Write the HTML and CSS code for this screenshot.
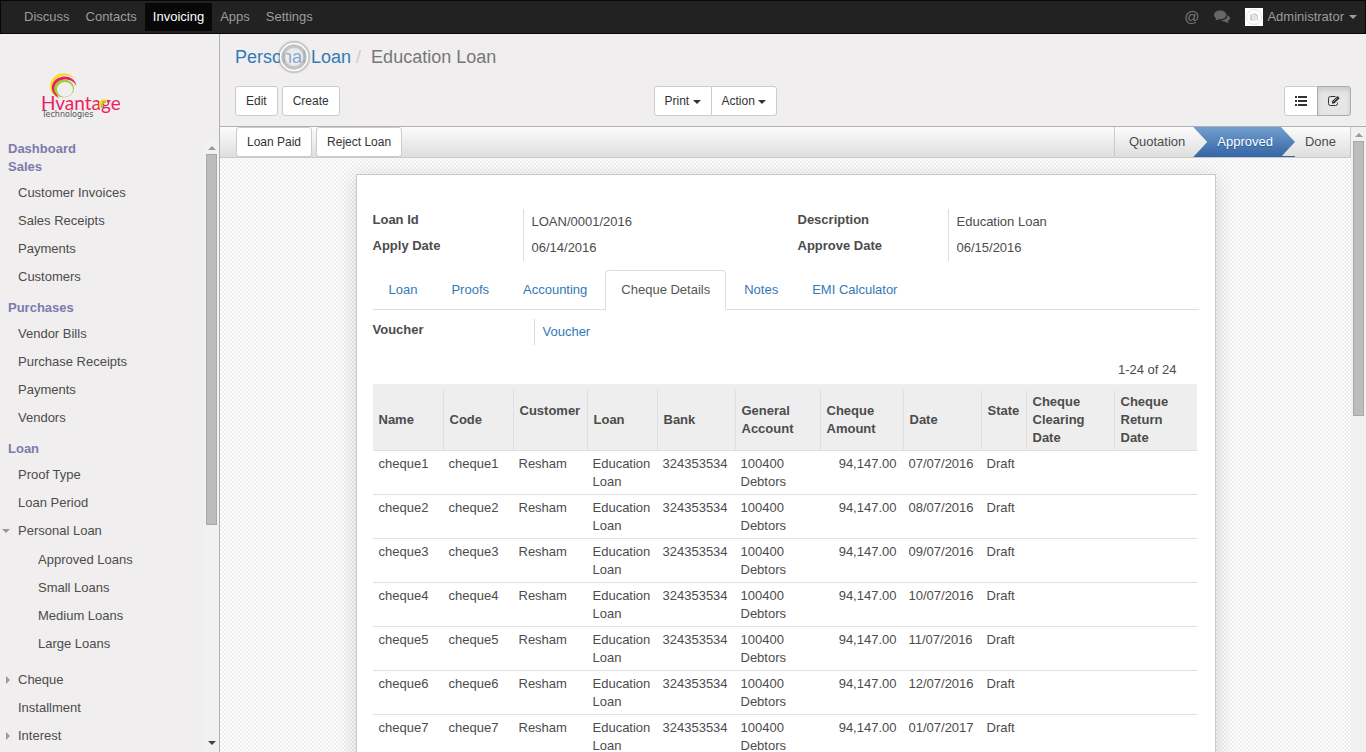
FILE: index.html
```html
<!DOCTYPE html>
<html lang="en">
<head>
    <meta charset="UTF-8">
    <meta name="viewport" content="width=device-width, initial-scale=1.0">
    <title>Education Loan - Odoo</title>
    <link rel="stylesheet" href="styles.css">
</head>
<body>

    <nav class="navbar">
        <ul class="nav-menu">
            <li><a href="#">Discuss</a></li>
            <li><a href="#">Contacts</a></li>
            <li><a href="#" class="active">Invoicing</a></li>
            <li><a href="#">Apps</a></li>
            <li><a href="#">Settings</a></li>
        </ul>
        <div class="systray">
            <a href="#" class="mention" aria-label="Mentions">@</a>
            <a href="#" class="chat" aria-label="Conversations">
                <svg width="16" height="14" viewBox="0 0 16 14" fill="#666">
                    <path d="M6.2 0.5C2.8 0.5 0 2.5 0 5c0 1.4 0.9 2.6 2.2 3.4C2 9.300 1.500 9.900 1 10.500c1.500-.1 2.800-.6 3.800-1.300 .5.1 .9.1 1.400.1 3.400 0 6.200-1.900 6.200-4.300S9.600.5 6.200.5z"/>
                    <path d="M13.600 5.200c0 3-3.200 5.200-7 5.300 1.100.8 2.600 1.200 4 1.100 1.100.8 2.500 1.300 4.300 1.400-.6-.6-1-1.200-1.200-2C15 10.200 16 9.100 16 7.900c0-1.100-.9-2.100-2.400-2.700z"/>
                </svg>
            </a>
            <a href="#" class="user">
                <svg width="18" height="18" viewBox="0 0 18 18">
                    <rect width="18" height="18" fill="#fff"/>
                    <circle cx="9" cy="9" r="7.500" fill="none" stroke="#e4e4e4"/>
                    <path d="M5 6.500h2l1-1h3l1 1h1v6H5z" fill="#d0d0d0"/>
                    <circle cx="9.500" cy="9.500" r="1.800" fill="none" stroke="#fff"/>
                    <path d="M4 4l10 10" stroke="#eee"/>
                </svg>
                Administrator
                <span class="caret"></span>
            </a>
        </div>
    </nav>

    <div class="webclient">
        <aside class="sidebar">
            <a href="#" class="logo" aria-label="Hvantage Technologies">
                <svg width="82" height="50" viewBox="0 0 82 50">
                    <path fill="#fadb1c" d="M34 9A13.500 13 0 1 0 16 26C6 17 12 3 23 3.500c5 0 9 2 11 5.500z"/>
                    <path fill="#ec1e63" d="M34.500 14C33 3 17 1 11 11c-3 6 0 12 6 15C12 19 14 8 23 7.500c5 0 9 2 11.500 6.500z"/>
                    <path fill="#a2cd3a" fill-rule="evenodd" d="M22 7.500a10 9 0 1 0 .1 18a10 9 0 1 0-.1-18zM23 10a8 7.500 0 1 1-.1 15a8 7.500 0 1 1 .1-15z"/>
                    <text x="-1" y="38" class="logo-name">Hvantage</text>
                    <path fill="none" stroke="#fadb1c" stroke-width="2" d="M58 35c-1-5 2-8 7-6"/>
                    <path fill="none" stroke="#a2cd3a" stroke-width="2" d="M60 36c-1-4 1-6 4-6"/>
                    <text x="0" y="45" class="logo-sub">Technologies</text>
                </svg>
            </a>
            <div class="menu-wrap">
                <div class="menu">
                    <a href="#" class="menu-title">Dashboard</a>
                    <a href="#" class="menu-title">Sales</a>
                    <ul>
                        <li><a href="#">Customer Invoices</a></li>
                        <li><a href="#">Sales Receipts</a></li>
                        <li><a href="#">Payments</a></li>
                        <li><a href="#">Customers</a></li>
                    </ul>
                    <a href="#" class="menu-title">Purchases</a>
                    <ul>
                        <li><a href="#">Vendor Bills</a></li>
                        <li><a href="#">Purchase Receipts</a></li>
                        <li><a href="#">Payments</a></li>
                        <li><a href="#">Vendors</a></li>
                    </ul>
                    <a href="#" class="menu-title">Loan</a>
                    <ul>
                        <li><a href="#">Proof Type</a></li>
                        <li><a href="#">Loan Period</a></li>
                        <li>
                            <a href="#" class="toggle opened">Personal Loan</a>
                            <ul class="submenu">
                                <li><a href="#">Approved Loans</a></li>
                                <li><a href="#">Small Loans</a></li>
                                <li><a href="#">Medium Loans</a></li>
                                <li><a href="#">Large Loans</a></li>
                            </ul>
                        </li>
                        <li><a href="#" class="toggle">Cheque</a></li>
                        <li><a href="#">Installment</a></li>
                        <li><a href="#" class="toggle">Interest</a></li>
                    </ul>
                </div>
                <div class="scrollbar">
                    <span class="arrow-up"></span>
                    <span class="thumb thumb-menu"></span>
                    <span class="arrow-down"></span>
                </div>
            </div>
        </aside>

        <main class="content">
            <header class="control-panel">
                <ol class="breadcrumb">
                    <li><a href="#">Personal Loan</a></li>
                    <li>Education Loan</li>
                </ol>
                <svg class="click-ring" width="36" height="36" viewBox="0 0 36 36">
                    <circle cx="18" cy="18" r="17" fill="#000" fill-opacity=".05"/>
                    <circle cx="18" cy="18" r="15" fill="none" stroke="#888" stroke-opacity=".3" stroke-width="2"/>
                    <circle cx="18" cy="18" r="8" fill="#fff" fill-opacity=".4"/>
                    <circle cx="18" cy="18" r="11" fill="none" stroke="#bbb" stroke-opacity=".8" stroke-width="4"/>
                    <circle cx="18" cy="18" r="13.500" fill="none" stroke="#fff" stroke-width="1.500"/>
                    <circle cx="18" cy="18" r="9" fill="none" stroke="#e4e4e4" stroke-width="1"/>
                </svg>
                <div class="cp-row">
                    <div class="cp-buttons">
                        <button type="button" class="btn">Edit</button>
                        <button type="button" class="btn">Create</button>
                    </div>
                    <div class="cp-right">
                        <div class="btn-group">
                            <button type="button" class="btn">Print <span class="caret"></span></button>
                            <button type="button" class="btn">Action <span class="caret"></span></button>
                        </div>
                        <div class="btn-group">
                            <button type="button" class="btn btn-icon" aria-label="List view">
                                <svg width="12" height="10" viewBox="0 0 12 10" fill="#333">
                                    <path d="M0 0h2v2H0zM3 0h9v2H3zM0 4h2v2H0zM3 4h9v2H3zM0 8h2v2H0zM3 8h9v2H3z"/>
                                </svg>
                            </button>
                            <button type="button" class="btn btn-icon active" aria-label="Form view">
                                <svg width="12" height="12" viewBox="0 0 12 12">
                                    <path d="M7.500 1.500H2.500A2 2 0 0 0 .5 3.500v5A2 2 0 0 0 2.500 10.500h5A2 2 0 0 0 9.500 8.500V7.500" fill="none" stroke="#333"/>
                                    <path d="M4 8.500V6.300L9.500 1l2.200 2.200L6.200 8.500z" fill="#333"/>
                                    <path d="M5.500 6.500L9 3" stroke="#e6e6e6" stroke-width=".6"/>
                                </svg>
                            </button>
                        </div>
                    </div>
                </div>
            </header>

            <div class="view-wrap">
                <div class="form-view">
                    <div class="statusbar">
                        <div class="status-buttons">
                            <button type="button" class="btn">Loan Paid</button>
                            <button type="button" class="btn">Reject Loan</button>
                        </div>
                        <ul class="status">
                            <li>Quotation</li>
                            <li class="current">Approved</li>
                            <li>Done</li>
                        </ul>
                    </div>

                    <div class="sheet">
                        <div class="group">
                            <dl class="fields">
                                <dt>Loan Id</dt><dd>LOAN/0001/2016</dd>
                                <dt>Apply Date</dt><dd>06/14/2016</dd>
                            </dl>
                            <dl class="fields">
                                <dt>Description</dt><dd>Education Loan</dd>
                                <dt>Approve Date</dt><dd>06/15/2016</dd>
                            </dl>
                        </div>

                        <ul class="tabs">
                            <li><a href="#">Loan</a></li>
                            <li><a href="#">Proofs</a></li>
                            <li><a href="#">Accounting</a></li>
                            <li><a href="#" class="active">Cheque Details</a></li>
                            <li><a href="#">Notes</a></li>
                            <li><a href="#">EMI Calculator</a></li>
                        </ul>

                        <dl class="fields voucher">
                            <dt>Voucher</dt><dd><a href="#">Voucher</a></dd>
                        </dl>

                        <div class="pager">1-24 of 24</div>
                        <table class="list">
                            <colgroup>
                                <col class="w-70"><col class="w-70"><col class="w-74"><col class="w-70">
                                <col class="w-78"><col class="w-85"><col class="w-83"><col class="w-78">
                                <col class="w-45"><col class="w-88"><col>
                            </colgroup>
                            <thead>
                                <tr>
                                    <th>Name</th>
                                    <th>Code</th>
                                    <th>Customer<br>&nbsp;</th>
                                    <th>Loan</th>
                                    <th>Bank</th>
                                    <th>General Account</th>
                                    <th>Cheque Amount</th>
                                    <th>Date</th>
                                    <th>State<br>&nbsp;</th>
                                    <th>Cheque Clearing Date</th>
                                    <th>Cheque Return Date</th>
                                </tr>
                            </thead>
                            <tbody>
                                <tr><td>cheque1</td><td>cheque1</td><td>Resham</td><td>Education Loan</td><td>324353534</td><td>100400 Debtors</td><td class="number">94,147.00</td><td>07/07/2016</td><td>Draft</td><td></td><td></td></tr>
                                <tr><td>cheque2</td><td>cheque2</td><td>Resham</td><td>Education Loan</td><td>324353534</td><td>100400 Debtors</td><td class="number">94,147.00</td><td>08/07/2016</td><td>Draft</td><td></td><td></td></tr>
                                <tr><td>cheque3</td><td>cheque3</td><td>Resham</td><td>Education Loan</td><td>324353534</td><td>100400 Debtors</td><td class="number">94,147.00</td><td>09/07/2016</td><td>Draft</td><td></td><td></td></tr>
                                <tr><td>cheque4</td><td>cheque4</td><td>Resham</td><td>Education Loan</td><td>324353534</td><td>100400 Debtors</td><td class="number">94,147.00</td><td>10/07/2016</td><td>Draft</td><td></td><td></td></tr>
                                <tr><td>cheque5</td><td>cheque5</td><td>Resham</td><td>Education Loan</td><td>324353534</td><td>100400 Debtors</td><td class="number">94,147.00</td><td>11/07/2016</td><td>Draft</td><td></td><td></td></tr>
                                <tr><td>cheque6</td><td>cheque6</td><td>Resham</td><td>Education Loan</td><td>324353534</td><td>100400 Debtors</td><td class="number">94,147.00</td><td>12/07/2016</td><td>Draft</td><td></td><td></td></tr>
                                <tr><td>cheque7</td><td>cheque7</td><td>Resham</td><td>Education Loan</td><td>324353534</td><td>100400 Debtors</td><td class="number">94,147.00</td><td>01/07/2017</td><td>Draft</td><td></td><td></td></tr>
                            </tbody>
                        </table>
                    </div>
                </div>
                <div class="scrollbar">
                    <span class="arrow-up"></span>
                    <span class="thumb thumb-view"></span>
                </div>
            </div>
        </main>
    </div>

</body>
</html>
```

FILE: styles.css
```css
* {
    box-sizing: border-box;
}

body {
    margin: 0;
    height: 100vh;
    display: flex;
    flex-direction: column;
    overflow: hidden;
    font-family: "Liberation Sans", Arial, sans-serif;
    font-size: 13px;
    line-height: 18px;
    color: #4c4c4c;
    background-color: #f0eeee;
}

a {
    color: #337ab7;
    text-decoration: none;
}

ul, ol, dl, dd {
    margin: 0;
    padding: 0;
    list-style: none;
}

svg {
    display: block;
}

.caret {
    display: inline-block;
    border-top: 4px solid;
    border-left: 4px solid transparent;
    border-right: 4px solid transparent;
    vertical-align: middle;
}

/* top bar */
.navbar {
    flex: none;
    display: flex;
    justify-content: space-between;
    align-items: center;
    height: 34px;
    padding: 0 8px 0 15px;
    background-color: #222;
    border: 1px solid #080808;
}

.nav-menu {
    display: flex;
}

.nav-menu a {
    display: block;
    padding: 5px 8px;
    color: #9d9d9d;
}

.nav-menu a.active {
    color: #fff;
    background-color: #080808;
}

.systray {
    display: flex;
    align-items: center;
    gap: 15px;
}

.systray a {
    color: #9d9d9d;
}

.systray .mention {
    color: #777;
    font-size: 15px;
}

.systray .user {
    display: flex;
    align-items: center;
    gap: 4px;
}

.user .caret {
    margin-left: 1px;
}

/* left menu */
.webclient {
    flex: 1;
    display: flex;
    min-height: 0;
}

.sidebar {
    flex: none;
    display: flex;
    flex-direction: column;
    width: 220px;
    border-right: 1px solid #afafb6;
}

.logo {
    height: 106px;
    padding: 38px 0 0 42px;
}

.logo svg {
    overflow: visible;
}

.logo-name {
    font-family: Lato, sans-serif;
    font-size: 19px;
    fill: #ec1e63;
}

.logo-sub {
    font-family: "DejaVu Sans", sans-serif;
    font-size: 8px;
    fill: #555;
}

.menu-wrap {
    flex: 1;
    display: flex;
    min-height: 0;
}

.menu {
    flex: 1;
    overflow: hidden;
}

.menu a {
    display: block;
    padding: 5px 18px;
    color: #4c4c4c;
}

.menu .menu-title {
    padding: 0 8px;
    font-weight: bold;
    color: #7c7bad;
}

.menu ul {
    margin: 3px 0 8px;
}

.menu .submenu {
    margin-top: 1px;
}

.menu .submenu a {
    padding-left: 38px;
}

.menu .toggle {
    display: flex;
    align-items: center;
    gap: 8px;
    padding-left: 6px;
}

.toggle::before {
    content: "";
    border-left: 4px solid #999;
    border-top: 4px solid transparent;
    border-bottom: 4px solid transparent;
}

.menu .toggle.opened {
    padding-left: 2px;
}

.toggle.opened::before {
    border-top: 4px solid #999;
    border-left: 4px solid transparent;
    border-right: 4px solid transparent;
    border-bottom: none;
}

.scrollbar {
    flex: none;
    display: flex;
    flex-direction: column;
    align-items: center;
    width: 15px;
    padding-bottom: 7px;
    background-color: #f1f1f1;
}

.thumb {
    width: 11px;
    background-color: #bcbcbc;
    border: 1px solid #a8a8a8;
}

.thumb-menu {
    height: 61.3%;
}

.thumb-view {
    height: 44.5%;
}

.arrow-up {
    margin: 6px 0 4px;
    border-bottom: 4px solid #999;
    border-left: 4px solid transparent;
    border-right: 4px solid transparent;
}

.arrow-down {
    margin-top: auto;
    border-top: 4px solid #444;
    border-left: 4px solid transparent;
    border-right: 4px solid transparent;
}

/* control panel */
.content {
    flex: 1;
    display: flex;
    flex-direction: column;
    min-width: 0;
}

.control-panel {
    position: relative;
    padding: 11px 15px 10px;
    border-bottom: 1px solid #afafb6;
}

.breadcrumb {
    display: flex;
    font-size: 18px;
    line-height: 24px;
    color: #777;
}

.breadcrumb li + li::before {
    content: "/";
    padding: 0 10px 0 5px;
    color: #ccc;
}

.click-ring {
    position: absolute;
    top: 5px;
    left: 56px;
}

.cp-row {
    display: grid;
    grid-template-columns: 3fr 5fr;
    margin-top: 17px;
}

.cp-buttons,
.status-buttons {
    display: flex;
    gap: 4px;
}

.cp-right {
    display: flex;
    justify-content: space-between;
}

.btn {
    height: 30px;
    padding: 0 10px;
    font-family: inherit;
    font-size: 12px;
    line-height: 18px;
    color: #333;
    background-color: #fff;
    border: 1px solid #ccc;
    border-radius: 3px;
    cursor: pointer;
}

.btn-group {
    display: flex;
}

.btn-group .btn:first-child {
    border-top-right-radius: 0;
    border-bottom-right-radius: 0;
}

.btn-group .btn:last-child {
    margin-left: -1px;
    border-top-left-radius: 0;
    border-bottom-left-radius: 0;
}

.btn.active {
    background-color: #e6e6e6;
    border-color: #adadad;
    box-shadow: inset 0 3px 5px rgba(0, 0, 0, 0.125);
}

/* form */
.view-wrap {
    flex: 1;
    display: flex;
    min-height: 0;
}

.form-view {
    flex: 1;
    min-width: 0;
    overflow: hidden;
    background: repeating-conic-gradient(#eee 0 25%, #fff 0 50%) 0 0 / 4px 4px;
}

.statusbar {
    display: flex;
    justify-content: space-between;
    height: 31px;
    padding: 0 0 0 16px;
    background: linear-gradient(#fcfcfc, #dedede);
    border-bottom: 1px solid #cacaca;
}

.status {
    display: flex;
    line-height: 30px;
    border-left: 1px solid #cacaca;
    border-right: 1px solid #cacaca;
}

.status li {
    position: relative;
    padding: 0 8px 0 24px;
    background: linear-gradient(#fcfcfc, #dedede);
}

.status li:first-child {
    padding-left: 14px;
}

.status li:last-child {
    padding-right: 14px;
}

.status li:not(:last-child)::after {
    content: "";
    position: absolute;
    top: 0;
    left: calc(100% - 1px);
    z-index: 1;
    width: 15px;
    height: 30px;
    background: inherit;
    clip-path: polygon(0 0, 1px 0, 100% 50%, 1px 100%, 0 100%);
}

.status .current {
    color: #fff;
    text-shadow: 0 1px 1px #2a5a95;
    background: linear-gradient(#729fcf, #3465a4);
}

.status .current::before {
    content: "";
    position: absolute;
    bottom: 0;
    left: 100%;
    z-index: 1;
    width: 14px;
    height: 1px;
    background-color: #3465a4;
}

.sheet {
    max-width: 860px;
    margin: 16px auto;
    padding: 34px 16px 16px;
    background-color: #fff;
    border: 1px solid #c8c8d3;
    box-shadow: 0 4px 20px rgba(0, 0, 0, 0.15);
}

.group {
    display: grid;
    grid-template-columns: 1fr 1fr;
    gap: 24px;
}

.fields {
    display: grid;
    grid-template-columns: 150px 1fr;
}

.fields dt {
    padding: 2px 0 6px;
    font-weight: bold;
}

.fields dd {
    padding: 4px 8px;
    border-left: 1px solid #ddd;
}

.voucher {
    grid-template-columns: 161px 1fr;
}

.tabs {
    display: flex;
    gap: 2px;
    margin: 9px 0;
    border-bottom: 1px solid #ddd;
}

.tabs a {
    display: block;
    margin-bottom: -1px;
    padding: 10px 15px;
    border: 1px solid transparent;
    border-radius: 4px 4px 0 0;
}

.tabs .active {
    color: #555;
    background-color: #fff;
    border-color: #ddd #ddd #fff;
}

.pager {
    margin: 16px 22px 5px;
    text-align: right;
}

.list {
    width: calc(100% - 2px);
    table-layout: fixed;
    border-collapse: separate;
    border-spacing: 0;
}

.list th {
    padding: 9px 4px 3px 7px;
    text-align: left;
    background: #eee linear-gradient(#dfdfdf, #dfdfdf) 0 6px / 1px 100% no-repeat;
    border-bottom: 1px solid #dfdfdf;
}

.list th:first-child {
    padding-left: 6px;
    background: #eee;
}

.list td {
    padding: 4px 4px 3px 6px;
    vertical-align: top;
    border-bottom: 1px solid #dfdfdf;
}

.list .number {
    padding-right: 6px;
    text-align: right;
}

.w-45 { width: 45px; }
.w-70 { width: 70px; }
.w-74 { width: 74px; }
.w-78 { width: 78px; }
.w-83 { width: 83px; }
.w-85 { width: 85px; }
.w-88 { width: 88px; }
```
